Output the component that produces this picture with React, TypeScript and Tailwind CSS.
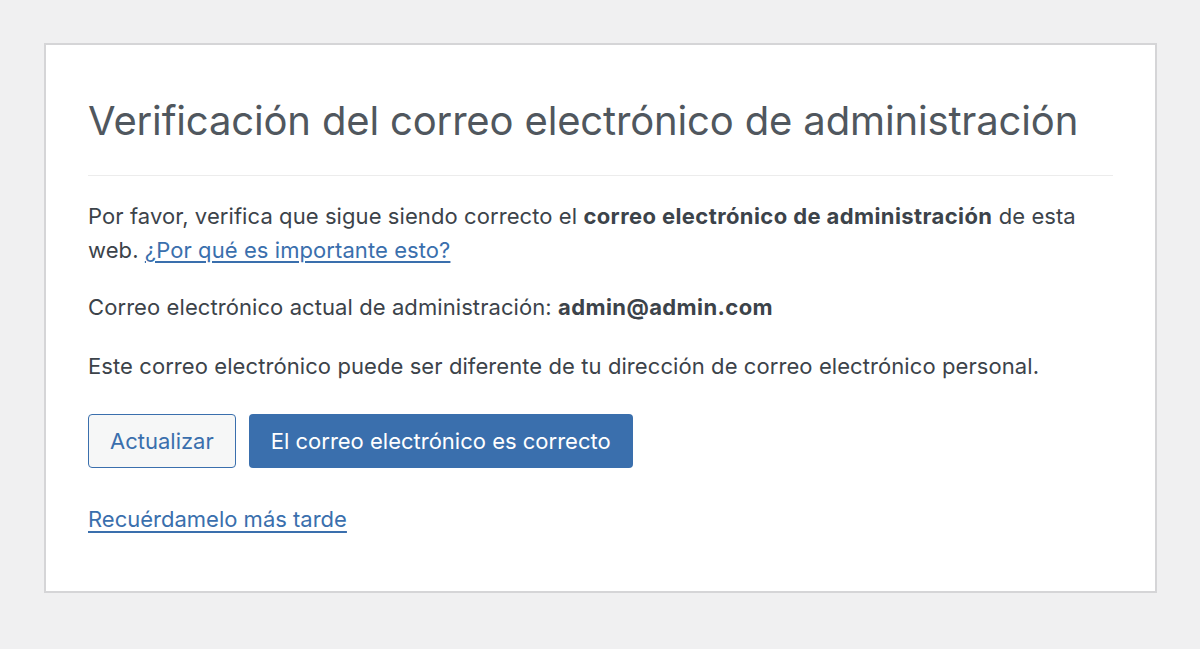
export default function App() {
  return (
    <div className="min-h-[649px] w-full bg-[#f0f0f1] pt-[43px] px-[44px]" style={{ fontFamily: 'Inter, "Noto Sans", sans-serif' }}>
      <div className="w-[1113px] h-[550px] bg-white border-2 border-[#d5d5d7] px-[42px] pt-[47px] text-[#3c434a]">
        <h1 className="text-[40px] leading-[58px] font-normal text-[#50575e] tracking-[-0.15px] pb-[25px] border-b border-[#ececec]">
          Verificación del correo electrónico de administración
        </h1>
        <p className="mt-[23px] text-[22px] leading-[34px] tracking-[0.08px]">
          Por favor, verifica que sigue siendo correcto el <strong className="font-bold tracking-[0.4px]">correo electrónico de administración</strong> de esta web.{' '}
          <a href="#" className="text-[#3a6fad] underline underline-offset-[3px]">¿Por qué es importante esto?</a>
        </p>
        <p className="mt-[23px] text-[22px] leading-[34px] tracking-[0.08px]">
          Correo electrónico actual de administración: <strong className="font-bold tracking-[0.4px]">admin@admin.com</strong>
        </p>
        <p className="mt-[25px] text-[22px] leading-[34px] tracking-[0.08px]">
          Este correo electrónico puede ser diferente de tu dirección de correo electrónico personal.
        </p>
        <div className="mt-[31px] flex gap-[13px]">
          <button className="h-[54px] px-[21px] rounded-[4px] border-[1.5px] border-[#3a6fad] bg-[#f6f7f7] text-[#3a6fad] text-[22px]">Actualizar</button>
          <button className="h-[54px] px-[22px] rounded-[4px] bg-[#3a6fad] text-white text-[22px]">El correo electrónico es correcto</button>
        </div>
        <div className="mt-[35px]">
          <a href="#" className="text-[22px] text-[#3a6fad] underline underline-offset-[4px]">Recuérdamelo más tarde</a>
        </div>
      </div>
    </div>
  );
}
